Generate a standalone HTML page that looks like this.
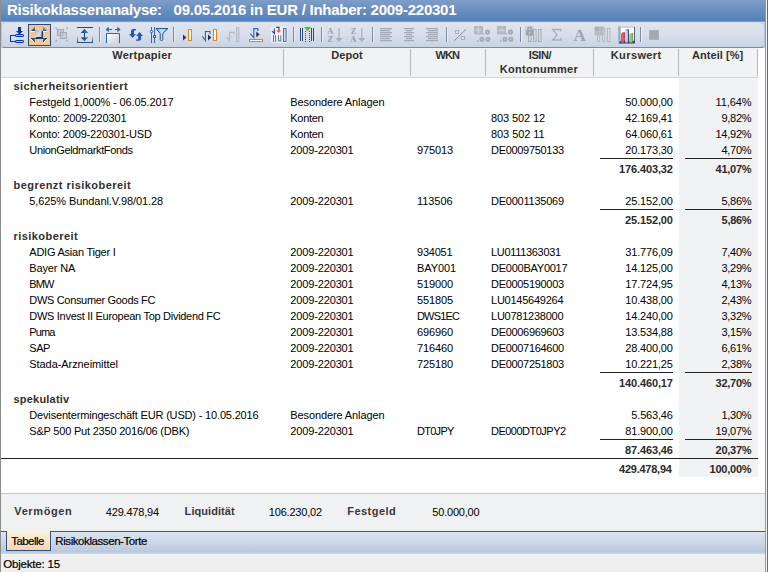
<!DOCTYPE html>
<html><head><meta charset="utf-8"><title>Risikoklassenanalyse</title>
<style>
html,body{margin:0;padding:0;}
body{width:768px;height:572px;position:relative;overflow:hidden;background:#fff;font-family:"Liberation Sans",sans-serif;font-size:11px;color:#000;}
div{position:absolute;box-sizing:border-box;}
.t{height:16px;line-height:16px;white-space:pre;}
.b{font-weight:bold;color:#2a2a2a;}
.g{font-weight:bold;color:#303030;}
.h{font-weight:bold;color:#303030;}
.sb{font-weight:bold;color:#383838;}
.tah{color:#000;-webkit-text-stroke:0.2px #000;}
.ul{height:1px;background:#222;}
#title{left:0;top:0;width:768px;height:21px;background:linear-gradient(#7d9dc8,#6b8fc1 45%,#5480b9);}
#title span{position:absolute;left:7px;top:1px;line-height:18px;font-size:15px;letter-spacing:-0.25px;font-weight:bold;color:#fff;white-space:pre;}
#tbwrap{left:0;top:21px;width:768px;height:27px;background:#b5c6e0;border-top:1px solid #8f9aae;}
#tbhl{left:1px;top:22px;width:764px;height:1px;background:#d3dcec;}
#tb{left:2px;top:1px;width:762px;height:24px;border-radius:4px;background:linear-gradient(#dfe4ee,#d7deea 50%,#c8d3e4);}
#tbline{left:3px;top:47px;width:760px;height:1px;background:#808a9c;}
#hdr{left:1px;top:48px;width:757px;height:30px;background:#f1f2f4;border-bottom:1px solid #d2d4d9;}
.hs{top:49px;width:1px;height:27px;background:#b6b8bd;}
#ant{left:679px;top:78px;width:79px;height:399px;background:#f1f2f4;}
#tot{left:1px;top:458px;width:757px;height:1px;background:#222;}
#lb{left:0;top:0;width:1px;height:572px;background:#8d8d8d;}
#rb1{left:765px;top:0;width:1px;height:572px;background:#8e98ac;}
#rb2{left:766px;top:0;width:1px;height:572px;background:#f4f6f9;}
#rb3{left:767px;top:0;width:1px;height:572px;background:#1c7bdc;}
#sum{left:1px;top:493px;width:764px;height:38px;background:#f0f1f3;border-top:1px solid #c4c6ca;}
#tabs{left:1px;top:531px;width:764px;height:23px;background:linear-gradient(#dde4ef,#c5d1e3 65%,#bac8df 90%,#cfd8e6);border-top:1px solid #3d5a8e;}
#tab1{left:6px;top:531px;width:45px;height:20px;background:linear-gradient(#fdf1da,#fbe3c8 50%,#f9d4b4);border:1px solid #30507f;border-top:none;}
#status{left:1px;top:554px;width:764px;height:18px;background:#efefef;}
</style></head><body>
<div id="title"><span>Risikoklassenanalyse:   09.05.2016 in EUR / Inhaber: 2009-220301</span></div>
<div id="tbwrap"><div id="tb"></div></div><div id="tbhl"></div>
<svg id="tbsvg" width="768" height="28" viewBox="0 21 768 28" style="position:absolute;left:0;top:21px">
<defs>
<linearGradient id="gOr" x1="0" y1="0" x2="0" y2="1"><stop offset="0" stop-color="#f2c3a0"/><stop offset="1" stop-color="#fbc58c"/></linearGradient>
<linearGradient id="gSq" x1="0" y1="0" x2="1" y2="1"><stop offset="0" stop-color="#a3acbc"/><stop offset="0.6" stop-color="#dde2ec"/><stop offset="1" stop-color="#b4bccb"/></linearGradient>
<linearGradient id="gFade" x1="0" y1="0" x2="0" y2="1"><stop offset="0" stop-color="#dbe6f8"/><stop offset="1" stop-color="#2f4a78"/></linearGradient>
<linearGradient id="gBox" x1="0" y1="0" x2="1" y2="1"><stop offset="0" stop-color="#ffffff"/><stop offset="1" stop-color="#c9cedb"/></linearGradient>
<linearGradient id="gAr" x1="0" y1="0" x2="1" y2="0"><stop offset="0" stop-color="#1f3f70"/><stop offset="1" stop-color="#2e8ab8"/></linearGradient>
<linearGradient id="gFun" x1="0" y1="0" x2="1" y2="0"><stop offset="0" stop-color="#5c9fe0"/><stop offset="0.5" stop-color="#c2e2fc"/><stop offset="1" stop-color="#5c9fe0"/></linearGradient>
</defs>
<!-- separators -->
<g fill="#7d8ca6" shape-rendering="crispEdges">
<rect x="99" y="27" width="1" height="15"/><rect x="173" y="27" width="1" height="15"/><rect x="293" y="27" width="1" height="15"/><rect x="321" y="27" width="1" height="15"/><rect x="372" y="27" width="1" height="15"/><rect x="446" y="27" width="1" height="15"/><rect x="520" y="27" width="1" height="15"/><rect x="640" y="27" width="1" height="15"/>
</g>
<g fill="#eef1f7" shape-rendering="crispEdges" opacity="0.8">
<rect x="100" y="27" width="1" height="15"/><rect x="174" y="27" width="1" height="15"/><rect x="294" y="27" width="1" height="15"/><rect x="322" y="27" width="1" height="15"/><rect x="373" y="27" width="1" height="15"/><rect x="447" y="27" width="1" height="15"/><rect x="521" y="27" width="1" height="15"/><rect x="641" y="27" width="1" height="15"/>
</g>
<!-- icon1: import tree -->
<g shape-rendering="crispEdges">
<rect x="18" y="27" width="3" height="4" fill="#0a34a8"/>
<polygon points="16,31 23,31 19.5,34.5" fill="#0a34a8" shape-rendering="auto"/>
<rect x="10" y="35" width="1" height="7" fill="#0a34a8"/>
<rect x="10" y="35" width="6" height="1" fill="#0a34a8"/><rect x="10" y="41" width="6" height="1" fill="#0a34a8"/>
<rect x="15.5" y="34.5" width="8" height="2" rx="0.6" fill="#8ec2f8" stroke="#0a34a8" stroke-width="1" shape-rendering="auto"/>
<rect x="15.5" y="40.5" width="8" height="2" rx="0.6" fill="#8ec2f8" stroke="#0a34a8" stroke-width="1" shape-rendering="auto"/>
</g>
<!-- icon2: selected fit -->
<rect x="28.5" y="24.5" width="22" height="21" fill="url(#gOr)" stroke="#2b4878" stroke-width="1"/>
<g>
<polygon points="35,27 35,31 31,31" fill="#1f4a80"/><polygon points="35,27 35,29.5 32.5,29.5" fill="#2e90c0"/>
<polygon points="43,27 47,31 43,31" fill="#1f6aa0"/><polygon points="43,27 45.5,29.5 43,29.5" fill="#2ea0d8"/>
<rect x="31" y="31" width="4" height="1" fill="#fff" shape-rendering="crispEdges"/><rect x="43" y="31" width="4" height="1" fill="#fff" shape-rendering="crispEdges"/>
<rect x="31" y="37.5" width="16" height="1.5" fill="#1f3a68" shape-rendering="crispEdges"/>
<rect x="36" y="31" width="7" height="7.5" fill="#1f3a68"/>
<rect x="35" y="30.3" width="6.5" height="6.7" fill="url(#gSq)"/>
<polygon points="31,38.5 35,38.5 35,43" fill="#1f4a80"/><polygon points="33,38.5 35,38.5 35,41" fill="#2e90c0"/>
<polygon points="43,38.5 47,38.5 43,43" fill="#1f4a80"/><polygon points="43,38.5 45,38.5 43,41" fill="#2e90c0"/>
<path d="M31,39 L34.6,43" stroke="#fff" stroke-width="1" fill="none"/><path d="M47,39 L43.4,43" stroke="#fff" stroke-width="1" fill="none"/>
</g>
<!-- icon3: grey overlap squares -->
<g fill="#c0c5ce" stroke="#a6abb7" stroke-width="1">
<rect x="57.5" y="29.5" width="6" height="6"/><rect x="60.5" y="32.5" width="6" height="6" fill-opacity="0.7"/>
<path d="M55.5,27.5 L57,29 M68,27.5 L66.5,29 M55.5,41.5 L57,40 M68,41.5 L66.5,40" fill="none" stroke-width="1.2"/>
</g>
<!-- icon4: vertical fit -->
<g shape-rendering="crispEdges">
<rect x="77" y="27" width="16" height="1" fill="#2f4a78"/>
<rect x="77" y="42" width="16" height="1" fill="#2f4a78"/>
<rect x="77" y="35" width="1" height="7" fill="url(#gFade)"/><rect x="92" y="35" width="1" height="7" fill="url(#gFade)"/>
<rect x="84" y="30" width="1" height="10" fill="#1f3f70"/>
</g>
<polygon points="84.5,28.8 88.2,33 80.8,33" fill="url(#gAr)"/>
<polygon points="84.5,41.2 88.2,37.3 80.8,37.3" fill="url(#gAr)"/>
<!-- icon5: horizontal fit -->
<rect x="106.5" y="33.5" width="13" height="10" fill="url(#gBox)" stroke="none"/>
<path d="M106.5,43 V33.5 H119.5 V43" fill="none" stroke="#2a62c0" stroke-width="1"/>
<path d="M107,29.5 H112 M115,29.5 H120" stroke="#2a62c0" stroke-width="1.2" fill="none"/>
<polygon points="105.6,29.5 108.8,26.8 108.8,32.2" fill="#2a62c0"/><polygon points="120.6,29.5 117.4,26.8 117.4,32.2" fill="#2a62c0"/>
<!-- icon6: refresh -->
<g fill="#2456c0">
<path d="M136,29 L133.2,29 Q131,29 131,31.4 L131,34 L129,34 L132.5,38 L136,34 L134,34 L134,31.6 Q134,30.3 135.1,30.3 L136,30.3 Z"/>
<path d="M136,40.7 L139,40.7 Q141.2,40.7 141.2,38.4 L141.2,36 L143.1,36 L139.6,32 L136.1,36 L138.2,36 L138.2,38.2 Q138.2,39.5 137.1,39.5 L136,39.5 Z"/>
</g>
<!-- icon7: filter -->
<g shape-rendering="crispEdges"><rect x="151" y="27" width="1" height="16" fill="#2a62c0"/><rect x="154" y="27" width="1" height="16" fill="#2a62c0"/></g>
<circle cx="151.5" cy="31.5" r="1.15" fill="#fff" stroke="#2456c0" stroke-width="1"/>
<rect x="153.5" y="35.5" width="2" height="2" fill="#fff" stroke="#f02010" stroke-width="1"/>
<path d="M156,28.5 H168 L162.8,33.5 V39.5 L161.5,41 L160.2,39.5 V33.5 Z" fill="url(#gFun)" stroke="#2a5590" stroke-width="1" stroke-linejoin="round"/>
<!-- icon8 -->
<rect x="188.5" y="29.5" width="3" height="11" fill="#fff" stroke="#f08000" stroke-width="1"/>
<polygon points="183,34.6 186.3,37.5 183,40.4" fill="#1f2f58"/>
<!-- icon9 -->
<rect x="213.5" y="29.5" width="3" height="11" fill="#fff" stroke="#f08000" stroke-width="1"/>
<polygon points="208,34.6 211.3,37.5 208,40.4" fill="#1f2f58"/>
<path d="M202.3,36.3 L205.4,40.6 V31.5 H210 V34" fill="none" stroke="#2a66b0" stroke-width="1.1"/>
<!-- icon10 grey -->
<path d="M226.3,37 L229.6,41 V32.4 H234.3 V34.8" fill="none" stroke="#b4b9c4" stroke-width="1.1"/>
<rect x="236.5" y="27.5" width="2.4" height="14" fill="#d0d5de" stroke="#b4b9c4" stroke-width="1"/>
<!-- icon11 -->
<rect x="249.5" y="39.5" width="13" height="2" fill="#fff" stroke="#f08000" stroke-width="1"/>
<path d="M250.2,33.7 L253.8,37.6 V28.6 H257.8 V31" fill="none" stroke="#2a66b0" stroke-width="1.1"/>
<polygon points="256.3,31.5 259.6,34.4 256.3,37.3" fill="#1f2f58"/>
<!-- icon12 -->
<g>
<rect x="271" y="26.5" width="16.5" height="16.5" rx="2" fill="#fff" opacity="0.5"/>
<path d="M272,31.2 L274.4,33.4 V28.4 M276.2,27.4 H279 V30.2" fill="none" stroke="#1a3ea8" stroke-width="1.1"/>
<polygon points="276.2,30.3 281.1,30.3 278.65,33" fill="#e2640c"/>
<g shape-rendering="crispEdges" fill="#5a76a4">
<rect x="273" y="35" width="1" height="7"/><rect x="275" y="35" width="1" height="7"/>
</g>
<path d="M278.5,35.4 V41 H280.8 V35.4" fill="#e8eef8" stroke="#4a6898" stroke-width="0.9"/>
<rect x="283.5" y="28.5" width="2.6" height="13" fill="#ccd5e5" stroke="#4a6898" stroke-width="0.9"/>
</g>
<!-- icon13 -->
<g shape-rendering="crispEdges" fill="#2f4a78">
<rect x="300" y="28" width="1" height="13"/><rect x="302" y="28" width="1" height="13"/>
<rect x="311" y="28" width="1" height="13"/><rect x="313" y="28" width="1" height="13"/>
</g>
<path d="M305.5,31 V42 M309.5,31 V42" stroke="#2f4a78" stroke-width="1" stroke-dasharray="1,1" fill="none" shape-rendering="crispEdges"/>
<polygon points="304,27 311.2,27 307.6,31.2" fill="#4fc01a"/>
<!-- icon14/15 sort -->
<g fill="#989eaa" font-family="Liberation Serif" font-weight="bold" font-size="8.5px">
<text x="327.2" y="33.6">A</text><text x="327.6" y="41.8">Z</text>
<text x="350.8" y="33.6">Z</text><text x="350.2" y="41.8">A</text>
</g>
<g fill="#a9afbb"><rect x="338.4" y="28" width="1.2" height="11"/><polygon points="335.4,38 342.6,38 339,42"/>
<rect x="361.2" y="28" width="1.2" height="11"/><polygon points="358.2,38 365.4,38 361.8,42"/></g>
<!-- icons 16-18 align -->
<g fill="#a3a9b5" shape-rendering="crispEdges">
<rect x="380" y="28" width="12" height="1"/><rect x="380" y="30" width="10" height="1"/><rect x="380" y="32" width="12" height="1"/><rect x="380" y="34" width="10" height="1"/><rect x="380" y="36" width="12" height="1"/><rect x="380" y="38" width="10" height="1"/><rect x="380" y="40" width="12" height="1"/>
<rect x="404" y="28" width="10" height="1"/><rect x="406" y="30" width="6" height="1"/><rect x="404" y="32" width="10" height="1"/><rect x="406" y="34" width="6" height="1"/><rect x="404" y="36" width="10" height="1"/><rect x="406" y="38" width="6" height="1"/><rect x="404" y="40" width="10" height="1"/>
<rect x="426" y="28" width="12" height="1"/><rect x="428" y="30" width="10" height="1"/><rect x="426" y="32" width="12" height="1"/><rect x="428" y="34" width="10" height="1"/><rect x="426" y="36" width="12" height="1"/><rect x="428" y="38" width="10" height="1"/><rect x="426" y="40" width="12" height="1"/>
</g>
<g fill="#c3c9d4" shape-rendering="crispEdges" opacity="0.7">
<rect x="380" y="29" width="12" height="1"/><rect x="380" y="31" width="10" height="1"/><rect x="380" y="33" width="12" height="1"/><rect x="380" y="35" width="10" height="1"/><rect x="380" y="37" width="12" height="1"/><rect x="380" y="39" width="10" height="1"/><rect x="380" y="41" width="12" height="1"/>
<rect x="404" y="29" width="10" height="1"/><rect x="406" y="31" width="6" height="1"/><rect x="404" y="33" width="10" height="1"/><rect x="406" y="35" width="6" height="1"/><rect x="404" y="37" width="10" height="1"/><rect x="406" y="39" width="6" height="1"/><rect x="404" y="41" width="10" height="1"/>
<rect x="426" y="29" width="12" height="1"/><rect x="428" y="31" width="10" height="1"/><rect x="426" y="33" width="12" height="1"/><rect x="428" y="35" width="10" height="1"/><rect x="426" y="37" width="12" height="1"/><rect x="428" y="39" width="10" height="1"/><rect x="426" y="41" width="12" height="1"/>
</g>
<!-- icon19 percent -->
<path d="M454.2,40.8 L466,29.2" stroke="#6f7788" stroke-width="0.8" fill="none"/>
<rect x="455.5" y="30.5" width="3" height="3" fill="#dfe3ea" stroke="#a9afbb" stroke-width="1"/>
<rect x="461.5" y="36.5" width="3" height="3" fill="#dfe3ea" stroke="#a9afbb" stroke-width="1"/>
<!-- icon20 / 21 decimals -->
<rect x="474" y="26" width="9" height="8.5" fill="#b3b9c5"/>
<path d="M478.5,27.6 V32.9 M475.8,30.25 H481.2" stroke="#cdd2db" stroke-width="1.7" fill="none"/>
<rect x="482.6" y="33.3" width="1.5" height="1.5" fill="#a2a8b4"/><rect x="485.85" y="30.45" width="3.3" height="3.5" rx="1.5" fill="#c3c8d2" stroke="#a4aab6" stroke-width="1.8"/>
<rect x="477" y="40.4" width="1.5" height="1.5" fill="#a2a8b4"/><rect x="480.25" y="37.55" width="3.3" height="3.5" rx="1.5" fill="#c3c8d2" stroke="#a4aab6" stroke-width="1.8"/><rect x="486.25" y="37.55" width="3.3" height="3.5" rx="1.5" fill="#c3c8d2" stroke="#a4aab6" stroke-width="1.8"/>
<rect x="497" y="26" width="9" height="8.5" fill="#b3b9c5"/>
<path d="M498.8,30.25 H504.2" stroke="#cdd2db" stroke-width="1.9" fill="none"/>
<rect x="505.6" y="33.3" width="1.5" height="1.5" fill="#a2a8b4"/><rect x="508.85" y="30.45" width="3.3" height="3.5" rx="1.5" fill="#c3c8d2" stroke="#a4aab6" stroke-width="1.8"/>
<rect x="500" y="40.4" width="1.5" height="1.5" fill="#a2a8b4"/><rect x="503.25" y="37.55" width="3.3" height="3.5" rx="1.5" fill="#c3c8d2" stroke="#a4aab6" stroke-width="1.8"/><rect x="509.25" y="37.55" width="3.3" height="3.5" rx="1.5" fill="#c3c8d2" stroke="#a4aab6" stroke-width="1.8"/>
<!-- icon22 lock columns -->
<rect x="525" y="26.3" width="8.7" height="9.4" fill="#c9ced8"/>
<rect x="526" y="30" width="7.4" height="5.6" rx="1" fill="#9da3af"/>
<path d="M527.9,30.4 V29.2 A1.85,1.85 0 0 1 531.6,29.2 V30.4" fill="none" stroke="#9da3af" stroke-width="1.5"/>
<rect x="529.3" y="31.6" width="0.9" height="2.2" fill="#d8dce4"/>
<rect x="528.5" y="35.5" width="2.6" height="6" fill="#d5d9e2" stroke="#a6acb8" stroke-width="1"/>
<rect x="533.5" y="29.5" width="2.6" height="12" fill="#d5d9e2" stroke="#a6acb8" stroke-width="1"/>
<rect x="538.5" y="29.5" width="2.6" height="12" fill="#d5d9e2" stroke="#a6acb8" stroke-width="1"/>
<!-- icon23 sigma -->
<path d="M560.8,31.6 V29.5 H552.6 L557.2,34.7 L552.6,40 H561 V37.8" fill="none" stroke="#a9afbb" stroke-width="1.3"/>
<!-- icon24 A -->
<text x="573.6" y="40.9" fill="#9da3af" font-family="Liberation Serif" font-weight="bold" font-size="17px">A</text>
<!-- icon25 -->
<rect x="597.5" y="35" width="2.2" height="6.4" fill="#dcdfe6" stroke="#b2b7c3" stroke-width="1"/>
<rect x="602.6" y="28.4" width="2.2" height="13" fill="#dcdfe6" stroke="#b2b7c3" stroke-width="1"/>
<rect x="607.5" y="28.4" width="2.4" height="13.2" fill="#dcdfe6" stroke="#b2b7c3" stroke-width="1"/>
<rect x="594.5" y="26.5" width="9.2" height="9" fill="#b4bac6"/>
<rect x="595.2" y="27.2" width="4.2" height="3.8" fill="#a7adba"/>
<path d="M599.7,27 V35 M595,31.3 H603.2" stroke="#c0c5cf" stroke-width="0.5" fill="none"/>
<!-- icon26 chart -->
<rect x="620.6" y="26.8" width="14.2" height="14.2" fill="#fff"/>
<polygon points="618.3,26.8 620.6,26.8 620.6,40.8 618.6,43.4 618.3,43.4" fill="#9aa8c2"/>
<rect x="618.3" y="26.6" width="16.5" height="0.9" fill="#a3afc6"/>
<rect x="634" y="27" width="0.9" height="16" fill="#3a5688"/>
<polygon points="618.5,43.5 620.6,40.8 634.8,40.8 634.8,43.5" fill="#27467c"/>
<polygon points="621,34.2 624.2,33.2 624.2,42.6 621,42.6" fill="#d8605a"/><polygon points="621,34.2 622.2,32.6 625.3,32.2 624.2,33.4" fill="#c03a36"/><polygon points="624.2,33.3 625.3,32.2 625.3,42.6 624.2,42.6" fill="#b02e2c"/>
<polygon points="625.3,30.8 627.8,30 627.8,42.6 625.3,42.6" fill="#c6cff0"/><polygon points="627.8,30 629,29 629,42.6 627.8,42.6" fill="#2f4fc0"/><polygon points="625.3,30.8 626.6,29.4 629,29 627.8,30.2" fill="#4060d0"/>
<polygon points="629.2,34.8 632.1,34 632.1,42.6 629.2,42.6" fill="#a9c24a"/><polygon points="632.1,34 633.2,33 633.2,42.6 632.1,42.6" fill="#7c9a24"/><polygon points="629.2,34.8 630.4,33.4 633.2,33 632.1,34.2" fill="#8aa830"/>
<!-- icon27 -->
<rect x="649" y="30" width="10" height="10" fill="#a9b0bc" rx="0.8"/>
<rect x="650" y="31" width="8" height="8" fill="#a2a9b5"/>
</svg>

<div id="tbline"></div>
<div id="hdr"></div>
<div class="hs" style="left:283px"></div><div class="hs" style="left:410px"></div><div class="hs" style="left:485px"></div><div class="hs" style="left:593px"></div><div class="hs" style="left:678px"></div><div class="hs" style="left:757px"></div>
<div id="ant"></div>
<div id="tot"></div>
<div id="sum"></div>
<div id="tabs"></div>
<div id="tab1"></div>
<div id="status"></div>
<div class="t g" style="left:13.50px;top:78px;letter-spacing:0.420px;">sicherheitsorientiert</div>
<div class="t" style="left:29.30px;top:94px;letter-spacing:-0.114px;">Festgeld 1,000% - 06.05.2017</div>
<div class="t" style="left:290.30px;top:94px;letter-spacing:-0.113px;">Besondere Anlagen</div>
<div class="t" style="left:625.30px;top:94px;letter-spacing:-0.165px;">50.000,00</div>
<div class="t" style="left:715.40px;top:94px;letter-spacing:-0.062px;">11,64%</div>
<div class="t" style="left:29.30px;top:110px;letter-spacing:-0.140px;">Konto: 2009-220301</div>
<div class="t" style="left:290.30px;top:110px;letter-spacing:-0.309px;">Konten</div>
<div class="t" style="left:491.00px;top:110px;letter-spacing:-0.104px;">803 502 12</div>
<div class="t" style="left:625.30px;top:110px;letter-spacing:-0.165px;">42.169,41</div>
<div class="t" style="left:721.40px;top:110px;letter-spacing:-0.252px;">9,82%</div>
<div class="t" style="left:29.30px;top:126px;letter-spacing:-0.188px;">Konto: 2009-220301-USD</div>
<div class="t" style="left:290.30px;top:126px;letter-spacing:-0.309px;">Konten</div>
<div class="t" style="left:491.00px;top:126px;letter-spacing:-0.069px;">803 502 11</div>
<div class="t" style="left:625.30px;top:126px;letter-spacing:-0.165px;">64.060,61</div>
<div class="t" style="left:715.40px;top:126px;letter-spacing:-0.225px;">14,92%</div>
<div class="t" style="left:29.30px;top:142px;letter-spacing:-0.353px;">UnionGeldmarktFonds</div>
<div class="t" style="left:290.30px;top:142px;letter-spacing:-0.142px;">2009-220301</div>
<div class="t" style="left:417.00px;top:142px;letter-spacing:-0.118px;">975013</div>
<div class="t" style="left:491.00px;top:142px;letter-spacing:-0.304px;">DE0009750133</div>
<div class="t" style="left:625.30px;top:142px;letter-spacing:-0.165px;">20.173,30</div>
<div class="t" style="left:721.40px;top:142px;letter-spacing:-0.252px;">4,70%</div>
<div class="t b" style="left:619.00px;top:161px;letter-spacing:-0.126px;">176.403,32</div>
<div class="t b" style="left:715.60px;top:161px;letter-spacing:-0.265px;">41,07%</div>
<div class="t g" style="left:13.50px;top:177px;letter-spacing:0.448px;">begrenzt risikobereit</div>
<div class="t" style="left:29.30px;top:193px;letter-spacing:-0.091px;">5,625% Bundanl.V.98/01.28</div>
<div class="t" style="left:290.30px;top:193px;letter-spacing:-0.142px;">2009-220301</div>
<div class="t" style="left:417.00px;top:193px;letter-spacing:-0.054px;">113506</div>
<div class="t" style="left:491.00px;top:193px;letter-spacing:-0.229px;">DE0001135069</div>
<div class="t" style="left:625.30px;top:193px;letter-spacing:-0.165px;">25.152,00</div>
<div class="t" style="left:721.40px;top:193px;letter-spacing:-0.252px;">5,86%</div>
<div class="t b" style="left:625.00px;top:212px;letter-spacing:-0.127px;">25.152,00</div>
<div class="t b" style="left:721.60px;top:212px;letter-spacing:-0.302px;">5,86%</div>
<div class="t g" style="left:13.50px;top:228px;letter-spacing:0.442px;">risikobereit</div>
<div class="t" style="left:29.30px;top:244px;letter-spacing:-0.237px;">ADIG Asian Tiger I</div>
<div class="t" style="left:290.30px;top:244px;letter-spacing:-0.142px;">2009-220301</div>
<div class="t" style="left:417.00px;top:244px;letter-spacing:-0.218px;">934051</div>
<div class="t" style="left:491.00px;top:244px;letter-spacing:-0.317px;">LU0111363031</div>
<div class="t" style="left:625.30px;top:244px;letter-spacing:-0.165px;">31.776,09</div>
<div class="t" style="left:721.40px;top:244px;letter-spacing:-0.252px;">7,40%</div>
<div class="t" style="left:29.30px;top:260px;letter-spacing:-0.148px;">Bayer NA</div>
<div class="t" style="left:290.30px;top:260px;letter-spacing:-0.142px;">2009-220301</div>
<div class="t" style="left:417.00px;top:260px;letter-spacing:-0.086px;">BAY001</div>
<div class="t" style="left:491.00px;top:260px;letter-spacing:-0.244px;">DE000BAY0017</div>
<div class="t" style="left:625.30px;top:260px;letter-spacing:-0.165px;">14.125,00</div>
<div class="t" style="left:721.40px;top:260px;letter-spacing:-0.252px;">3,29%</div>
<div class="t" style="left:29.30px;top:276px;letter-spacing:-0.900px;">BMW</div>
<div class="t" style="left:290.30px;top:276px;letter-spacing:-0.142px;">2009-220301</div>
<div class="t" style="left:417.00px;top:276px;letter-spacing:-0.118px;">519000</div>
<div class="t" style="left:491.00px;top:276px;letter-spacing:-0.304px;">DE0005190003</div>
<div class="t" style="left:625.30px;top:276px;letter-spacing:-0.165px;">17.724,95</div>
<div class="t" style="left:721.40px;top:276px;letter-spacing:-0.252px;">4,13%</div>
<div class="t" style="left:29.30px;top:292px;letter-spacing:-0.325px;">DWS Consumer Goods FC</div>
<div class="t" style="left:290.30px;top:292px;letter-spacing:-0.142px;">2009-220301</div>
<div class="t" style="left:417.00px;top:292px;letter-spacing:-0.118px;">551805</div>
<div class="t" style="left:491.00px;top:292px;letter-spacing:-0.238px;">LU0145649264</div>
<div class="t" style="left:625.30px;top:292px;letter-spacing:-0.165px;">10.438,00</div>
<div class="t" style="left:721.40px;top:292px;letter-spacing:-0.252px;">2,43%</div>
<div class="t" style="left:29.30px;top:308px;letter-spacing:-0.290px;">DWS Invest II European Top Dividend FC</div>
<div class="t" style="left:290.30px;top:308px;letter-spacing:-0.142px;">2009-220301</div>
<div class="t" style="left:417.00px;top:308px;letter-spacing:-0.824px;">DWS1EC</div>
<div class="t" style="left:491.00px;top:308px;letter-spacing:-0.238px;">LU0781238000</div>
<div class="t" style="left:625.30px;top:308px;letter-spacing:-0.165px;">14.240,00</div>
<div class="t" style="left:721.40px;top:308px;letter-spacing:-0.252px;">3,32%</div>
<div class="t" style="left:29.30px;top:324px;letter-spacing:-0.900px;">Puma</div>
<div class="t" style="left:290.30px;top:324px;letter-spacing:-0.142px;">2009-220301</div>
<div class="t" style="left:417.00px;top:324px;letter-spacing:-0.118px;">696960</div>
<div class="t" style="left:491.00px;top:324px;letter-spacing:-0.304px;">DE0006969603</div>
<div class="t" style="left:625.30px;top:324px;letter-spacing:-0.165px;">13.534,88</div>
<div class="t" style="left:721.40px;top:324px;letter-spacing:-0.252px;">3,15%</div>
<div class="t" style="left:29.30px;top:340px;letter-spacing:-0.487px;">SAP</div>
<div class="t" style="left:290.30px;top:340px;letter-spacing:-0.142px;">2009-220301</div>
<div class="t" style="left:417.00px;top:340px;letter-spacing:-0.118px;">716460</div>
<div class="t" style="left:491.00px;top:340px;letter-spacing:-0.304px;">DE0007164600</div>
<div class="t" style="left:625.30px;top:340px;letter-spacing:-0.165px;">28.400,00</div>
<div class="t" style="left:721.40px;top:340px;letter-spacing:-0.252px;">6,61%</div>
<div class="t" style="left:29.30px;top:356px;letter-spacing:-0.072px;">Stada-Arzneimittel</div>
<div class="t" style="left:290.30px;top:356px;letter-spacing:-0.142px;">2009-220301</div>
<div class="t" style="left:417.00px;top:356px;letter-spacing:-0.118px;">725180</div>
<div class="t" style="left:491.00px;top:356px;letter-spacing:-0.304px;">DE0007251803</div>
<div class="t" style="left:625.30px;top:356px;letter-spacing:-0.165px;">10.221,25</div>
<div class="t" style="left:721.40px;top:356px;letter-spacing:-0.252px;">2,38%</div>
<div class="t b" style="left:619.00px;top:375px;letter-spacing:-0.126px;">140.460,17</div>
<div class="t b" style="left:715.60px;top:375px;letter-spacing:-0.265px;">32,70%</div>
<div class="t g" style="left:13.50px;top:391px;letter-spacing:0.202px;">spekulativ</div>
<div class="t" style="left:29.30px;top:407px;letter-spacing:-0.169px;">Devisentermingeschäft EUR (USD) - 10.05.2016</div>
<div class="t" style="left:290.30px;top:407px;letter-spacing:-0.113px;">Besondere Anlagen</div>
<div class="t" style="left:631.30px;top:407px;letter-spacing:-0.172px;">5.563,46</div>
<div class="t" style="left:721.40px;top:407px;letter-spacing:-0.252px;">1,30%</div>
<div class="t" style="left:29.30px;top:423px;letter-spacing:-0.206px;">S&amp;P 500 Put 2350 2016/06 (DBK)</div>
<div class="t" style="left:290.30px;top:423px;letter-spacing:-0.142px;">2009-220301</div>
<div class="t" style="left:417.00px;top:423px;letter-spacing:-0.724px;">DT0JPY</div>
<div class="t" style="left:491.00px;top:423px;letter-spacing:-0.508px;">DE000DT0JPY2</div>
<div class="t" style="left:625.30px;top:423px;letter-spacing:-0.165px;">81.900,00</div>
<div class="t" style="left:715.40px;top:423px;letter-spacing:-0.225px;">19,07%</div>
<div class="t b" style="left:625.00px;top:442px;letter-spacing:-0.127px;">87.463,46</div>
<div class="t b" style="left:715.60px;top:442px;letter-spacing:-0.265px;">20,37%</div>
<div class="t b" style="left:619.00px;top:461px;letter-spacing:-0.237px;">429.478,94</div>
<div class="t b" style="left:709.60px;top:461px;letter-spacing:-0.241px;">100,00%</div>
<div class="t h" style="left:112.30px;top:47px;letter-spacing:0.247px;">Wertpapier</div>
<div class="t h" style="left:331.30px;top:47px;letter-spacing:0.050px;">Depot</div>
<div class="t h" style="left:435.50px;top:47px;letter-spacing:-0.900px;">WKN</div>
<div class="t h" style="left:528.80px;top:47px;letter-spacing:-0.423px;">ISIN/</div>
<div class="t h" style="left:499.80px;top:61px;letter-spacing:0.282px;">Kontonummer</div>
<div class="t h" style="left:610.80px;top:47px;letter-spacing:0.383px;">Kurswert</div>
<div class="t h" style="left:692.00px;top:47px;letter-spacing:0.049px;">Anteil [%]</div>
<div class="t sb" style="left:14.30px;top:503px;letter-spacing:0.605px;">Vermögen</div>
<div class="t" style="left:105.80px;top:504px;letter-spacing:-0.193px;">429.478,94</div>
<div class="t sb" style="left:184.60px;top:503px;letter-spacing:0.064px;">Liquidität</div>
<div class="t" style="left:268.80px;top:504px;letter-spacing:-0.193px;">106.230,02</div>
<div class="t sb" style="left:347.30px;top:503px;letter-spacing:0.456px;">Festgeld</div>
<div class="t" style="left:432.30px;top:504px;letter-spacing:-0.202px;">50.000,00</div>
<div class="t tah" style="left:11.20px;top:533px;letter-spacing:-0.541px;font-size:11.5px;">Tabelle</div>
<div class="t tah" style="left:55.30px;top:533px;letter-spacing:-0.422px;font-size:11.5px;">Risikoklassen-Torte</div>
<div class="t tah" style="left:3.20px;top:556px;letter-spacing:-0.182px;font-size:11.5px;">Objekte: 15</div>
<div class="ul" style="left:600px;width:73px;top:158px"></div>
<div class="ul" style="left:685px;width:67px;top:158px"></div>
<div class="ul" style="left:600px;width:73px;top:209px"></div>
<div class="ul" style="left:685px;width:67px;top:209px"></div>
<div class="ul" style="left:600px;width:73px;top:372px"></div>
<div class="ul" style="left:685px;width:67px;top:372px"></div>
<div class="ul" style="left:600px;width:73px;top:439px"></div>
<div class="ul" style="left:685px;width:67px;top:439px"></div>
<div id="lb"></div><div id="rb1"></div><div id="rb2"></div><div id="rb3"></div>
</body></html>
